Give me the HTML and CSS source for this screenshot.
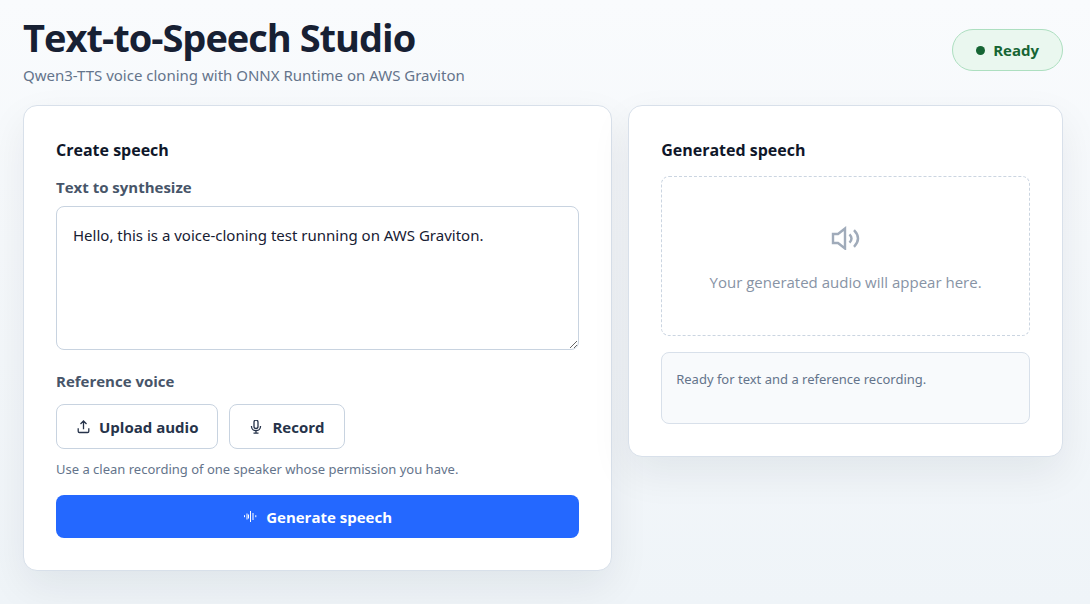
FILE: index.html
```html
<!DOCTYPE html>
<html lang="en">
<head>
    <meta charset="utf-8">
    <meta name="viewport" content="width=device-width, initial-scale=1">
    <title>Text-to-Speech Studio</title>
    <link rel="stylesheet" href="styles.css">
</head>

<body>
    <header class="page-header">
        <div>
            <h1>Text-to-Speech Studio</h1>
            <p class="subtitle">Qwen3-TTS voice cloning with ONNX Runtime on AWS Graviton</p>
        </div>
        <div class="status" role="status"><span class="dot"></span>Ready</div>
    </header>

    <main class="workspace">
        <form class="panel">
            <h2>Create speech</h2>
            <label class="field-label" for="text">Text to synthesize</label>
            <textarea id="text" class="text-input">Hello, this is a voice-cloning test running on AWS Graviton.</textarea>

            <p class="field-label voice-label" id="voice-label">Reference voice</p>
            <div class="voice-actions" role="group" aria-labelledby="voice-label">
                <button type="button" class="button">
                    <svg class="icon" viewBox="0 0 14 14" aria-hidden="true">
                        <path d="M7.5 9.2V1M4.5 4l3-3 3 3M2.2 8.3v3q0 1.2 1.2 1.2h8.2q1.2 0 1.2-1.2v-3" />
                    </svg>
                    Upload audio
                </button>
                <button type="button" class="button">
                    <svg class="icon" viewBox="0 0 14 14" aria-hidden="true">
                        <rect x="5" y="0.2" width="4" height="8.3" rx="2" />
                        <path d="M2.5 6v.5a4.5 4.2 0 0 0 9 0V6M7 10.7v2.5M4.5 13.2h5" />
                    </svg>
                    Record
                </button>
            </div>
            <p class="hint">Use a clean recording of one speaker whose permission you have.</p>

            <button type="submit" class="button primary">
                <svg class="icon" viewBox="0 0 14 14" aria-hidden="true">
                    <path d="M1.5 5.2v2M4 3.5v6M5.5 4.5v4M7.5 1v11M10 3v7M12.8 5.2v2" />
                </svg>
                Generate speech
            </button>
        </form>

        <section class="panel">
            <h2>Generated speech</h2>
            <div class="empty-player">
                <svg class="speaker" viewBox="0 0 30 24" aria-hidden="true">
                    <path d="M2 8h5l7-5.5v20L7 17H2z" />
                    <path d="M18.5 8.3q4 4.2 0 8.4M23 4.2q8 8.3 0 16.6" />
                </svg>
                <p>Your generated audio will appear here.</p>
            </div>
            <output class="message">Ready for text and a reference recording.</output>
        </section>
    </main>
</body>

</html>
```
FILE: styles.css
```css
* {
    box-sizing: border-box;
}

body {
    min-height: 100vh;
    margin: 0;
    padding: 13px 27px 32px 23px;
    font-family: "Segoe UI", "Open Sans", "Noto Sans", sans-serif;
    font-size: 15px;
    line-height: 24px;
    color: #172033;
    background: linear-gradient(#f9fbfd, #eff4f8);
}

h1,
h2,
p {
    margin: 0;
}

h1 {
    font-size: 38px;
    line-height: 48px;
    font-weight: 700;
    letter-spacing: -1px;
}

h2 {
    margin-bottom: 14px;
    font-size: 16px;
    line-height: 24px;
    font-weight: 700;
    color: #0f172a;
}

button,
textarea {
    font: inherit;
}

.subtitle,
.text-input,
.hint,
.message {
    font-family: "Segoe UI", "Noto Sans", "Open Sans", sans-serif;
}

.page-header {
    display: flex;
    align-items: center;
    justify-content: space-between;
    gap: 24px;
    margin-bottom: 18px;
}

.subtitle {
    margin-top: 2px;
    color: #64748b;
}

.status {
    display: flex;
    align-items: center;
    gap: 8px;
    padding: 8px 23px;
    border: 1px solid #addfc0;
    border-radius: 24px;
    font-weight: 700;
    color: #166534;
    background: #eaf7ef;
}

.dot {
    width: 9px;
    height: 9px;
    border-radius: 50%;
    background: currentColor;
}

.workspace {
    display: grid;
    grid-template-columns: 1.355fr 1fr;
    align-items: start;
    gap: 16px;
}

.panel {
    padding: 32px;
    border: 1px solid #d8e0ea;
    border-radius: 14px;
    background: #fff;
    box-shadow: 0 16px 40px rgba(15, 23, 42, 0.07);
}

.panel h2 {
    margin-bottom: 14px;
}

.field-label {
    display: block;
    margin: -1px 0 7px;
    font-weight: 700;
    color: #475569;
}

.text-input {
    display: block;
    width: 100%;
    height: 144px;
    padding: 16px;
    border: 1px solid #c8d3e0;
    border-radius: 8px;
    color: #172033;
    background: #fff;
    resize: vertical;
}

.voice-label {
    margin: 19px 0 11px;
}

.voice-actions {
    display: flex;
    gap: 11px;
}

.button {
    display: flex;
    align-items: center;
    justify-content: center;
    gap: 9px;
    height: 45px;
    padding: 0 19px;
    border: 1px solid #c8d3e0;
    border-radius: 8px;
    font-weight: 700;
    color: #26334a;
    background: #fff;
    cursor: pointer;
}

.icon {
    width: 14px;
    height: 14px;
    fill: none;
    stroke: currentColor;
    stroke-width: 1.3;
}

.hint {
    margin: 10px 0 16px;
    font-size: 13px;
    line-height: 20px;
    color: #64748b;
}

.primary {
    width: 100%;
    height: 43px;
    border: 0;
    color: #fff;
    background: #2468ff;
}

.primary .icon {
    stroke-width: 1;
}

.empty-player {
    display: flex;
    flex-direction: column;
    align-items: center;
    justify-content: center;
    gap: 20px;
    height: 160px;
    padding: 24px 16px 16px;
    border: 1px dashed #cbd5e1;
    border-radius: 8px;
    color: #8793a5;
}

.speaker {
    width: 30px;
    height: 24px;
    fill: none;
    stroke: #a0abba;
    stroke-width: 2.4;
}

.message {
    display: block;
    min-height: 72px;
    margin-top: 16px;
    padding: 16px 14px;
    border: 1px solid #d8e0ea;
    border-radius: 8px;
    font-size: 13px;
    line-height: 20px;
    color: #64748b;
    background: #f8fafc;
}

@media (max-width: 760px) {
    .workspace {
        grid-template-columns: 1fr;
    }
}
```
